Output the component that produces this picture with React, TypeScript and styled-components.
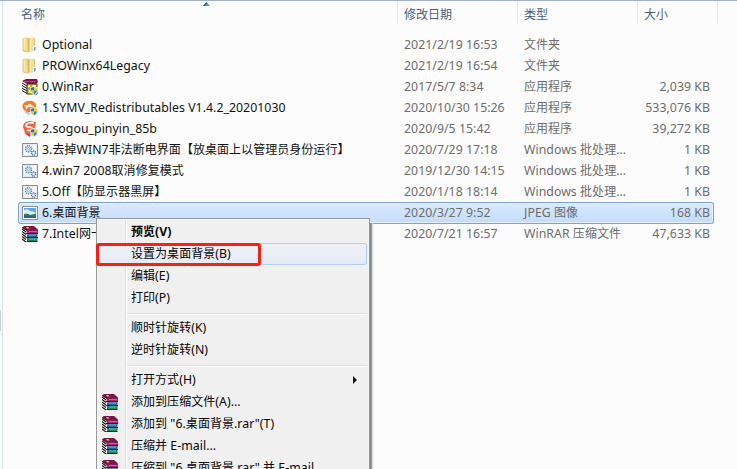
import React from "react";
import styled, { createGlobalStyle, css } from "styled-components";

const Global = createGlobalStyle`
  * { box-sizing: border-box; }
  body { margin: 0; overflow: hidden; background: #fcfcfc; }
`;

const Explorer = styled.main`
  position: relative;
  display: flex;
  width: 737px;
  height: 469px;
  overflow: hidden;
  background: #fcfcfc;
  border-top: 1px solid #a0afca;
  color: #111;
  font: 12.3px/21px "Noto Sans", "Noto Sans CJK SC", sans-serif;
  white-space: nowrap;
`;
const Splitter = styled.div`
  width: 3px;
  flex: none;
  padding-top: 309px;
  border-right: 1px solid #d3e5f5;
`;
const SplitterThumb = styled.div`
  width: 1px;
  height: 21px;
  background: #cfcfcf;
`;
const Listing = styled.section`
  flex: none;
  width: 734px;
  padding-left: 15px;
`;
const columns = css`
  display: grid;
  grid-template-columns: 379px 120px 120px 77px;
`;
const Header = styled.header`
  ${columns}
  grid-template-columns: 380px 120px 120px 80px;
  height: 33px;
`;
const HeaderCell = styled.div<{ $first?: boolean }>`
  height: 25px;
  padding: 3px 0 0 ${(p) => (p.$first ? 3 : 6)}px;
  color: #4c607a;
  border-right: 1px solid;
  border-image: linear-gradient(#d8e5f5, #dfe9f5 60%, #fcfcfc) 1;
  border-width: 0 1px 0 0;
`;
const Row = styled.div<{ $selected?: boolean }>`
  ${columns}
  width: 696px;
  height: 21px;
  ${(p) =>
    p.$selected &&
    css`
      height: 22px;
      margin-bottom: -1px;
      border-radius: 3px;
      background: linear-gradient(#dcebfd, #c1dbfc);
      box-shadow: inset 0 0 0 1px #7da2ce, inset 0 0 0 2px #e5f0fe;
    `}
`;
const NameCell = styled.div`
  display: flex;
  align-items: flex-start;
  height: 21px;
  padding-left: 4px;
  gap: 4px;

  > svg {
    margin-top: 3px;
  }
`;
const Cell = styled.div`
  padding-left: 7px;
  color: #6d6d6d;
`;
const SizeCell = styled(Cell)`
  padding: 0 4px 0 0;
  text-align: right;
`;
const Han = styled.span`
  font-size: 12px;
  letter-spacing: 0.04px;
`;
const Latin = styled.span`
  letter-spacing: 0.04px;
`;
const IconSvg = styled.svg`
  display: block;
  flex: none;
  width: 16px;
  height: 16px;
`;
const SortMark = styled.svg`
  position: absolute;
  top: 1px;
  left: 203px;
  width: 7px;
  height: 4px;
`;
const Menu = styled.nav`
  position: absolute;
  top: 217px;
  left: 96px;
  width: 274px;
  height: 270px;
  padding: 2px 2px 0;
  border: 1px solid #979797;
  background: linear-gradient(90deg, transparent 28px, #dfdfdf 28px, #dfdfdf 29px, #fff 29px, #fff 30px, transparent 30px) 0 2px no-repeat, #f0f0f0;
  box-shadow: inset 0 0 0 1px #f6f6f6, 1px 5px 0 #858585, 2px 5px 0 #a0a0a0, 3px 5px 1px #d5d5d5;
`;
const MenuItem = styled.div<{ $hot?: boolean; $strong?: boolean }>`
  display: flex;
  align-items: center;
  height: 22px;
  padding-right: 10px;
  color: #050505;
  font-weight: ${(p) => (p.$strong ? 700 : 400)};
  ${(p) =>
    p.$hot &&
    css`
      border-radius: 3px;
      background: linear-gradient(#f0f2f5, #e4ebf6);
      box-shadow: inset 0 0 0 1px #aecff7;
    `}
`;
const MenuIcon = styled.span`
  flex: none;
  width: 32px;
  padding-left: 3px;
`;
const MenuText = styled.span`
  flex: 1;
  padding-bottom: 2px;
`;
const Divider = styled.div`
  height: 2px;
  margin: 4px 0 2px 28px;
  border-top: 1px solid #dedede;
  border-bottom: 1px solid #fff;
`;
const Highlight = styled.div`
  position: absolute;
  left: 96px;
  top: 242px;
  width: 165px;
  height: 23px;
  border: 3px solid #fb2112;
  border-radius: 3px;
`;

type Kind = "folder" | "books" | "winrar" | "symv" | "sogou" | "batch" | "image";

const Shield = () => (
  <g>
    <path d="M12 7l4 1.300v3.200c0 2.200-1.700 3.700-4 4.500-2.300-.8-4-2.300-4-4.500V8.300z" fill="#dfe8ef" />
    <path d="M12 8v3.600H8.800V8.900z" fill="#1f78bd" />
    <path d="M12 8v3.600h3.200V8.900z" fill="#f8cd26" />
    <path d="M12 11.600H8.900q.4 2.500 3.100 3.600z" fill="#f6c21d" />
    <path d="M12 11.600h3.100q-.4 2.500-3.100 3.600z" fill="#2589cb" />
  </g>
);

const Books = () => (
  <g>
    <path d="M0 2l5 3v11H4L0 13z" fill="#fff" />
    <path d="M0 3l4 3M0 5.500l4 3M0 8l4 3M0 10.500l4 3M0 13l4 3" stroke="#111" strokeWidth="1.100" />
    <path d="M0 1.500L2 0h10l4 3.500-1 1H4z" fill="#7b1748" />
    <path d="M0 1.500L4.500 4.500H16" stroke="#380c24" fill="none" strokeWidth=".8" />
    <path d="M4 4.500h12v3H5z" fill="#b51f70" />
    <path d="M7 5.500h8" stroke="#e46aab" strokeWidth=".8" />
    <path d="M3.500 7h12.500v1.300H4.500z" fill="#14121a" />
    <path d="M5 8.300h10.500v2.700H5z" fill="#1668ae" />
    <path d="M7 9.200h7" stroke="#68b9e6" strokeWidth=".8" />
    <path d="M3.500 10.900H16v1.200H4.500z" fill="#111a24" />
    <path d="M5 12h10.500v3H5z" fill="#198866" />
    <path d="M7 13h7" stroke="#7bd6ad" strokeWidth=".8" />
    <path d="M4 15h11.500v1H5z" fill="#10251f" />
    <path d="M4 1h2.500l1 1.500H5z" fill="#d9bd32" />
  </g>
);

const Icon = ({ kind }: { kind: Kind }) => (
  <IconSvg viewBox="0 0 16 16">
    {kind === "folder" && (
      <g>
        <path d="M1 1L5 0l2 1.500V15L1 14z" fill="#f3dc8c" />
        <path d="M1 1.300V14l5 1" stroke="#d9bd68" fill="none" strokeWidth=".8" />
        <path d="M2.300 2v11" stroke="#fff0b8" />
        <path d="M5 1h3v13l-2 1.500z" fill="#e8cc76" />
        <path d="M6.800 2v12.500" stroke="#c9a750" strokeWidth=".9" />
        <path d="M7.500 1.500L12 .5l1 1V14l-5.500 1z" fill="#f2dc91" />
        <path d="M8.700 2.500v11" stroke="#fff3c5" />
        <path d="M12.700 1.500v7" stroke="#d6ba69" strokeWidth=".8" />
        <path d="M11 9h2.500v4.500H11z" fill="#f9fcff" />
        <path d="M12 10h1.500v3.500H12z" fill="#50a9e4" />
      </g>
    )}
    {kind === "books" && <Books />}
    {kind === "winrar" && (
      <g>
        <path d="M0 2L4 0h11l1 3-2 2H5z" fill="#831052" />
        <path d="M2 2.500h12" stroke="#d03b87" />
        <path d="M0 3l5 3v10H4L0 13z" fill="#fff" />
        <path d="M0 4l5 3M0 6.500l5 3M0 9l5 3M0 11.500l5 3" stroke="#111" />
        <path d="M5 5h10v10H5z" fill="#d4d419" stroke="#36331f" />
        <path d="M6 6h3v3H6zm5 0h3v3h-3zM7 11h5v3H7z" fill="#fffa7b" />
        <path d="M9 6v7M6 9h7" stroke="#716a26" />
        <Shield />
      </g>
    )}
    {kind === "symv" && (
      <g>
        <path d="M1 4q3-4 9-3 5 2 4 6-3 6-9 5Q-1 9 1 4z" fill="#f47b20" />
        <path d="M2 5l3 .5 3-2 2 2 3 .5-4 1-2-.5-3 3-.5-3z" fill="#fff" />
        <path d="M3 10q3 4 7 2l-3 3-4-2z" fill="#b8c6d2" />
        <Shield />
      </g>
    )}
    {kind === "sogou" && (
      <g>
        <path d="M1 6q0-5 6-6l7 1-1 8-5 6-5-3z" fill="#ef683e" />
        <path d="M12 2Q5 1 4 4q0 2 4 2 4 1 2 3-2 1-5 0" fill="none" stroke="#fff" strokeWidth="1.700" />
        <path d="M2 12l6 1v3z" fill="#c6432f" />
        <Shield />
      </g>
    )}
    {kind === "batch" && (
      <g>
        <path d="M.5 1.500h15v13H.5z" fill="#f7fbfe" stroke="#868f97" />
        <path d="M1.500 2.500h13v11h-13z" fill="none" stroke="#e5ebef" />
        <circle cx="6.500" cy="6.800" r="3" fill="#dbeaf4" stroke="#668eae" strokeWidth="1.500" strokeDasharray="1.300 .7" />
        <circle cx="6.500" cy="6.800" r="1.100" fill="#fff" stroke="#7895ab" strokeWidth=".6" />
        <circle cx="11.500" cy="11" r="2.100" fill="#d4e3ef" stroke="#4e789d" strokeWidth="1.300" strokeDasharray="1.100 .6" />
        <circle cx="11.500" cy="11" r=".7" fill="#fff" />
      </g>
    )}
    {kind === "image" && (
      <g>
        <path d="M.5 1.500h15v13H.5z" fill="#fff" stroke="#8a9298" />
        <path d="M2 3h12v10H2z" fill="#60a8dd" />
        <path d="M2 5q4-2 6 1 3 0 6 2v2H2z" fill="#d5eef7" />
        <path d="M2 9q4-1 6 1l6-1.500V12H2z" fill="#397a57" />
        <path d="M2 11.500l5-1 7 1.500v1H2z" fill="#286194" />
      </g>
    )}
  </IconSvg>
);

// Han glyphs and Latin runs carry separate sizes, as they do in the system UI font.
const Label = ({ text }: { text: string }) => (
  <span>
    {text.split(/([\u3000-\u9fff]+)/).map((part, i) =>
      i % 2 ? <Han key={i}>{part}</Han> : <Latin key={i}>{part}</Latin>,
    )}
  </span>
);

const files: { kind: Kind; name: string; date: string; type: string; size?: string }[] = [
  { kind: "folder", name: "Optional", date: "2021/2/19 16:53", type: "文件夹" },
  { kind: "folder", name: "PROWinx64Legacy", date: "2021/2/19 16:54", type: "文件夹" },
  { kind: "winrar", name: "0.WinRar", date: "2017/5/7 8:34", type: "应用程序", size: "2,039 KB" },
  { kind: "symv", name: "1.SYMV_Redistributables V1.4.2_20201030", date: "2020/10/30 15:26", type: "应用程序", size: "533,076 KB" },
  { kind: "sogou", name: "2.sogou_pinyin_85b", date: "2020/9/5 15:42", type: "应用程序", size: "39,272 KB" },
  { kind: "batch", name: "3.去掉WIN7非法断电界面【放桌面上以管理员身份运行】", date: "2020/7/29 17:18", type: "Windows 批处理...", size: "1 KB" },
  { kind: "batch", name: "4.win7 2008取消修复模式", date: "2019/12/30 14:15", type: "Windows 批处理...", size: "1 KB" },
  { kind: "batch", name: "5.Off【防显示器黑屏】", date: "2020/1/18 18:14", type: "Windows 批处理...", size: "1 KB" },
  { kind: "image", name: "6.桌面背景", date: "2020/3/27 9:52", type: "JPEG 图像", size: "168 KB" },
  { kind: "books", name: "7.Intel网卡", date: "2020/7/21 16:57", type: "WinRAR 压缩文件", size: "47,633 KB" },
];

type Entry = { text: string; hot?: boolean; strong?: boolean; rar?: boolean; sub?: boolean } | null;
const entries: Entry[] = [
  { text: "预览(V)", strong: true },
  { text: "设置为桌面背景(B)", hot: true },
  { text: "编辑(E)" },
  { text: "打印(P)" },
  null,
  { text: "顺时针旋转(K)" },
  { text: "逆时针旋转(N)" },
  null,
  { text: "打开方式(H)", sub: true },
  { text: "添加到压缩文件(A)...", rar: true },
  { text: '添加到 "6.桌面背景.rar"(T)', rar: true },
  { text: "压缩并 E-mail...", rar: true },
  { text: '压缩到 "6.桌面背景.rar" 并 E-mail', rar: true },
];

export default function App() {
  return (
    <Explorer>
      <Global />
      <Splitter><SplitterThumb /></Splitter>
      <Listing>
        <Header>
          {["名称", "修改日期", "类型", "大小"].map((title, i) => (
            <HeaderCell key={title} $first={i === 0}><Han>{title}</Han></HeaderCell>
          ))}
        </Header>
        {files.map((f) => (
          <Row key={f.name} $selected={f.kind === "image"}>
            <NameCell><Icon kind={f.kind} /><Label text={f.name} /></NameCell>
            <Cell><Label text={f.date} /></Cell>
            <Cell><Label text={f.type} /></Cell>
            <SizeCell>{f.size && <Label text={f.size} />}</SizeCell>
          </Row>
        ))}
      </Listing>
      <SortMark viewBox="0 0 7 4"><path d="M3.500 0L7 4H0z" fill="#5c9fc5" /><path d="M3.500 0L0 4h2l2-3z" fill="#315c7d" /></SortMark>
      <Menu>
        {entries.map((e, i) =>
          e ? (
            <MenuItem key={i} $hot={e.hot} $strong={e.strong}>
              <MenuIcon>{e.rar && <Icon kind="books" />}</MenuIcon>
              <MenuText><Label text={e.text} /></MenuText>
              {e.sub && <svg width="4" height="8" viewBox="0 0 4 8"><path d="M0 0l4 4-4 4z" fill="#111" /></svg>}
            </MenuItem>
          ) : <Divider key={i} />,
        )}
      </Menu>
      <Highlight />
    </Explorer>
  );
}
